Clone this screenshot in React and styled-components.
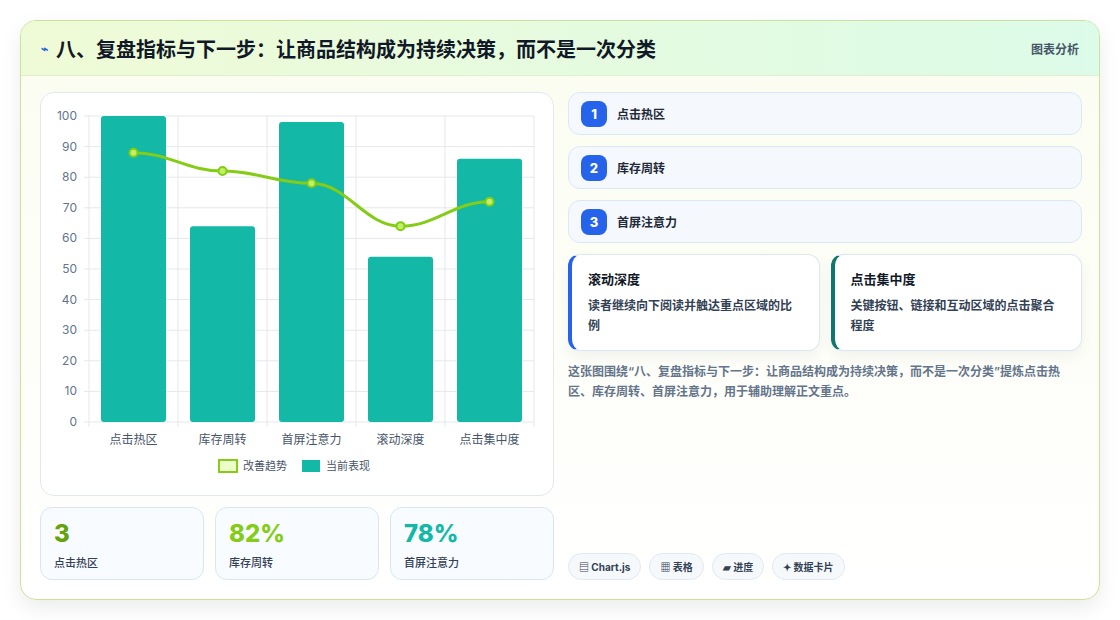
import React from "react";
import styled, { createGlobalStyle } from "styled-components";

const G = createGlobalStyle`
  body{margin:0;background:#fff;font-family:Inter,"Noto Sans CJK SC",sans-serif;}
`;
const Page = styled.div`padding:20px;`;
const Card = styled.div`
  width:1080px;height:580px;box-sizing:border-box;border:1px solid #c9e39a;border-radius:16px;
  background:linear-gradient(180deg,#fbfdf0 0%,#fff 100%);box-shadow:0 8px 20px rgba(0,0,0,0.08);overflow:hidden;
  display:flex;flex-direction:column;
`;
const Header = styled.div`
  height:56px;box-sizing:border-box;display:flex;align-items:center;justify-content:space-between;padding:0 20px 0 20px;
  background:linear-gradient(90deg,#effbd6,#dcfbe8);border-bottom:1px solid #e2eed0;
`;
const Title = styled.h1`margin:0;font-size:20px;font-weight:700;color:#111827;display:flex;align-items:center;gap:8px;`;
const Tag = styled.span`font-size:12px;font-weight:600;color:#475569;`;
const Body = styled.div`flex:1;display:grid;grid-template-columns:514px 514px;gap:14px;padding:16px 19px 19px 19px;`;
const Col = styled.div`display:flex;flex-direction:column;gap:11px;`;
const ChartBox = styled.div`height:404px;box-sizing:border-box;background:#fff;border:1px solid #e2e8f0;border-radius:14px;`;
const Stats = styled.div`display:grid;grid-template-columns:repeat(3,1fr);gap:11px;`;
const Stat = styled.div`height:73px;box-sizing:border-box;border:1px solid #dbe5f0;border-radius:12px;background:#f8fbff;padding:12px 13px;`;
const Num = styled.div`font-size:24px;font-weight:800;color:${p=>p.c};line-height:28px;`;
const Lbl = styled.div`font-size:11px;color:#334155;margin-top:6px;font-weight:500;`;
const Item = styled.div`height:43px;box-sizing:border-box;border:1px solid #dbe7f5;border-radius:12px;background:#f5f9fd;display:flex;align-items:center;gap:10px;padding:0 12px;font-size:12px;font-weight:700;color:#1f2937;`;
const Badge = styled.span`width:26px;height:26px;border-radius:8px;background:#2563eb;color:#fff;display:flex;align-items:center;justify-content:center;font-size:13px;font-weight:800;`;
const Pair = styled.div`display:grid;grid-template-columns:1fr 1fr;gap:11px;`;
const Info = styled.div`height:97px;box-sizing:border-box;background:#fff;border:1px solid #dbe7f5;border-left:4px solid ${p=>p.c};border-radius:12px;padding:14px 16px;box-shadow:0 6px 14px rgba(0,0,0,0.05);`;
const IT = styled.div`font-size:13px;font-weight:700;color:#111827;`;
const ID = styled.div`font-size:12px;font-weight:600;color:#334155;line-height:20px;margin-top:8px;`;
const Note = styled.p`margin:0;font-size:12px;font-weight:600;color:#64748b;line-height:20px;`;
const Spacer = styled.div`flex:1;`;
const Tags = styled.div`display:flex;gap:8px;`;
const Pill = styled.span`height:27px;box-sizing:border-box;padding:0 10px;border:1px solid #e2e8f0;border-radius:14px;background:#f6f9fc;font-size:10px;font-weight:700;color:#334155;display:flex;align-items:center;gap:4px;`;

const vals=[100,64,98,54,86], line=[88,82,78,64,72], cats=["点击热区","库存周转","首屏注意力","滚动深度","点击集中度"];
function Chart(){
  const x0=48,x1=493,y0=329,y1=23,cw=(x1-x0)/5;
  const Y=v=>y0-(v/100)*(y0-y1);
  const pts=line.map((v,i)=>[x0+cw*(i+.5),Y(v)]);
  let d=`M${pts[0][0]},${pts[0][1]}`;
  for(let i=0;i<4;i++){const [a,b]=pts[i],[c,e]=pts[i+1];const t=cw*0.4;d+=` C${a+t},${b} ${c-t},${e} ${c},${e}`;}
  return <svg width="512" height="402" style={{display:"block"}} fontFamily='Inter,"Noto Sans CJK SC",sans-serif'>
    {[0,10,20,30,40,50,60,70,80,90,100].map(v=><g key={v}><line x1={x0-5} x2={x1} y1={Y(v)} y2={Y(v)} stroke="#e5e7eb"/><text x={x0-12} y={Y(v)+4} fontSize="12" fill="#64748b" textAnchor="end">{v}</text></g>)}
    {[0,1,2,3,4,5].map(i=><line key={i} x1={x0+cw*i} x2={x0+cw*i} y1={y1} y2={y0+5} stroke="#e5e7eb"/>)}
    {vals.map((v,i)=><rect key={i} x={x0+cw*i+12} y={Y(v)} width={cw-24} height={y0-Y(v)} rx="3" fill="#14b8a6"/>)}
    <path d={d} fill="none" stroke="#84cc16" strokeWidth="3"/>
    {pts.map((p,i)=><circle key={i} cx={p[0]} cy={p[1]} r="4" fill="#bef264" stroke="#84cc16" strokeWidth="2"/>)}
    {cats.map((c,i)=><text key={i} x={x0+cw*(i+.5)} y={351} fontSize="12" fill="#475569" textAnchor="middle">{c}</text>)}
    <rect x="178" y="367" width="18" height="12" fill="#ecfccb" stroke="#84cc16" strokeWidth="2"/>
    <text x="202" y="377" fontSize="11" fill="#475569">改善趋势</text>
    <rect x="261" y="367" width="18" height="12" fill="#14b8a6"/>
    <text x="285" y="377" fontSize="11" fill="#475569">当前表现</text>
  </svg>;
}

export default function App(){
  return <Page><G/><Card>
    <Header><Title><span style={{color:"#2563eb",fontSize:12}}>⌁</span>八、复盘指标与下一步：让商品结构成为持续决策，而不是一次分类</Title><Tag>图表分析</Tag></Header>
    <Body>
      <Col>
        <ChartBox><Chart/></ChartBox>
        <Stats>
          <Stat><Num c="#65a30d">3</Num><Lbl>点击热区</Lbl></Stat>
          <Stat><Num c="#84cc16">82%</Num><Lbl>库存周转</Lbl></Stat>
          <Stat><Num c="#14b8a6">78%</Num><Lbl>首屏注意力</Lbl></Stat>
        </Stats>
      </Col>
      <Col>
        <Item><Badge>1</Badge>点击热区</Item>
        <Item><Badge>2</Badge>库存周转</Item>
        <Item><Badge>3</Badge>首屏注意力</Item>
        <Pair>
          <Info c="#2563eb"><IT>滚动深度</IT><ID>读者继续向下阅读并触达重点区域的比例</ID></Info>
          <Info c="#0f766e"><IT>点击集中度</IT><ID>关键按钮、链接和互动区域的点击聚合程度</ID></Info>
        </Pair>
        <Note>这张图围绕“八、复盘指标与下一步：让商品结构成为持续决策，而不是一次分类”提炼点击热区、库存周转、首屏注意力，用于辅助理解正文重点。</Note>
        <Spacer/>
        <Tags><Pill>▤ Chart.js</Pill><Pill>▦ 表格</Pill><Pill>▰ 进度</Pill><Pill>✦ 数据卡片</Pill></Tags>
      </Col>
    </Body>
  </Card></Page>;
}
